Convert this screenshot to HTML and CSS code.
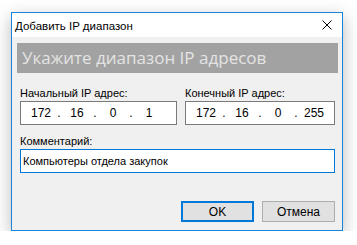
FILE: index.html
```html
<!DOCTYPE html>
<html lang="ru">
<head>
    <meta charset="UTF-8">
    <title>Добавить IP диапазон</title>
    <link rel="stylesheet" href="styles.css">
</head>
<body>
    <div class="window">
        <div class="titlebar">
            <span class="title">Добавить IP диапазон</span>
            <span class="close">
                <svg width="10" height="10" viewBox="0 0 10 10">
                    <path d="M0.5 0.5 L9.5 9.5 M9.5 0.5 L0.5 9.5" stroke="#000" stroke-width="1" fill="none"/>
                </svg>
            </span>
        </div>
        <div class="content">
            <div class="banner">Укажите диапазон IP адресов</div>

            <div class="form">
                <div class="ip-row">
                    <div class="field field-start">
                        <label>Начальный IP адрес:</label>
                        <div class="ip-box">
                            <span class="oct">172</span><span class="dot">.</span>
                            <span class="oct">16</span><span class="dot">.</span>
                            <span class="oct">0</span><span class="dot">.</span>
                            <span class="oct">1</span>
                        </div>
                    </div>
                    <div class="field field-end">
                        <label>Конечный IP адрес:</label>
                        <div class="ip-box">
                            <span class="oct">172</span><span class="dot">.</span>
                            <span class="oct">16</span><span class="dot">.</span>
                            <span class="oct">0</span><span class="dot">.</span>
                            <span class="oct">255</span>
                        </div>
                    </div>
                </div>

                <div class="field field-comment">
                    <label>Комментарий:</label>
                    <div class="text-box">Компьютеры отдела закупок</div>
                </div>

                <div class="buttons">
                    <button class="btn btn-default">OK</button>
                    <button class="btn">Отмена</button>
                </div>
            </div>
        </div>
    </div>
</body>
</html>
```

FILE: styles.css
```css
* {
    margin: 0;
    padding: 0;
    box-sizing: border-box;
}

body {
    background-color: #ffffff;
    padding: 12px 0 0 11px;
    font-family: "Liberation Sans", Arial, sans-serif;
    font-size: 11px;
    color: #000;
}

.window {
    width: 332px;
    height: 219px;
    border: 1px solid #1a82d8;
    background-color: #f0f0f0;
    box-shadow: 0 5px 16px rgba(0, 0, 0, 0.28);
    display: flex;
    flex-direction: column;
}

.titlebar {
    height: 24px;
    background-color: #ffffff;
    display: flex;
    align-items: center;
    justify-content: space-between;
    padding: 0 10px 0 3px;
}

.title {
    font-size: 11.5px;
    line-height: 14px;
    padding-top: 1px;
}

.close {
    display: flex;
}

.content {
    padding: 6px 4px 0 5px;
}

.banner {
    height: 30px;
    background-color: #a2a2a2;
    color: #e4e4e4;
    font-family: "Open Sans", "Noto Sans", sans-serif;
    font-size: 17px;
    line-height: 30px;
    padding-left: 5px;
}

.form {
    padding: 0 3px;
}

.ip-row {
    display: flex;
    gap: 8px;
    margin-top: 13px;
}

label {
    display: block;
    font-size: 11px;
    line-height: 14px;
    height: 15px;
}

.ip-box {
    height: 24px;
    border: 1px solid #7a7a7a;
    background-color: #fff;
    display: flex;
    align-items: center;
    padding-left: 7px;
    font-size: 12px;
}

.field-start .ip-box {
    width: 157px;
}

.field-end .ip-box {
    width: 150px;
}

.oct {
    width: 26px;
    text-align: center;
}

.dot {
    width: 10px;
    text-align: center;
}

.field-comment {
    margin-top: 9px;
}

.text-box {
    width: 315px;
    height: 24px;
    border: 1px solid #0078d7;
    background-color: #fff;
    font-size: 11px;
    line-height: 22px;
    padding-left: 2px;
}

.buttons {
    display: flex;
    justify-content: flex-end;
    gap: 8px;
    margin-top: 28px;
}

.btn {
    width: 73px;
    height: 21px;
    background-color: #e1e1e1;
    border: 1px solid #adadad;
    font-family: "Liberation Sans", Arial, sans-serif;
    font-size: 12px;
    color: #000;
}

.btn-default {
    border: 2px solid #0078d7;
}
```
